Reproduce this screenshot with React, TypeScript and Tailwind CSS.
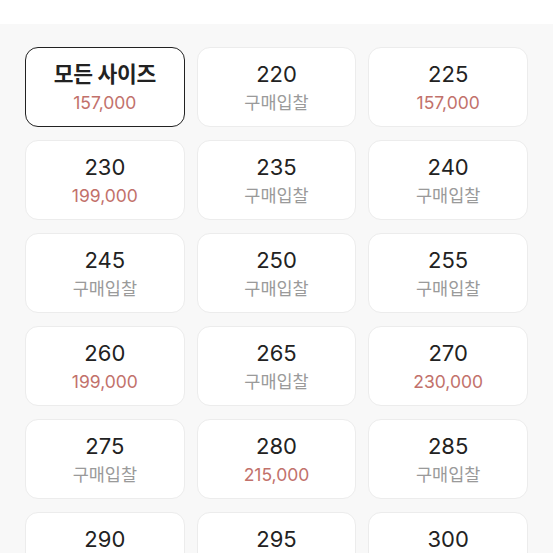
import React from "react";

type Item = { size: string; price?: string };

const items: Item[] = [
  { size: "모든 사이즈", price: "157,000" },
  { size: "220" },
  { size: "225", price: "157,000" },
  { size: "230", price: "199,000" },
  { size: "235" },
  { size: "240" },
  { size: "245" },
  { size: "250" },
  { size: "255" },
  { size: "260", price: "199,000" },
  { size: "265" },
  { size: "270", price: "230,000" },
  { size: "275" },
  { size: "280", price: "215,000" },
  { size: "285" },
  { size: "290" },
  { size: "295" },
  { size: "300" },
];

export default function App() {
  return (
    <div
      className="w-[553px] h-[553px] overflow-hidden bg-white"
      style={{ fontFamily: 'Inter, "Noto Sans CJK KR", sans-serif' }}
    >
      <div className="h-[24px] bg-white" />
      <div className="bg-[#f8f8f8] px-[25px] pt-[23px] pb-[40px] grid grid-cols-3 gap-x-[12px] gap-y-[13px]">
        {items.map((it, i) => {
          const selected = i === 0;
          return (
            <div
              key={it.size}
              className={
                selected
                  ? "h-[80px] rounded-[13px] bg-white border-[1.5px] border-[#222222] flex flex-col items-center justify-center pt-[1px]"
                  : "h-[80px] rounded-[13px] bg-white border border-[#ececec] flex flex-col items-center justify-center pt-[1px]"
              }
            >
              <div
                className={
                  selected
                    ? "text-[21.5px] leading-[28px] font-bold text-[#222222] tracking-[-0.3px]"
                    : "text-[22px] leading-[28px] text-[#222222]"
                }
              >
                {it.size}
              </div>
              {it.price ? (
                <div className="text-[17.5px] leading-[24px] text-[#c2716b] mt-[3px]">{it.price}</div>
              ) : (
                <div className="text-[17.5px] leading-[24px] text-[#9a9a9a] mt-[3px]">구매입찰</div>
              )}
            </div>
          );
        })}
      </div>
    </div>
  );
}
